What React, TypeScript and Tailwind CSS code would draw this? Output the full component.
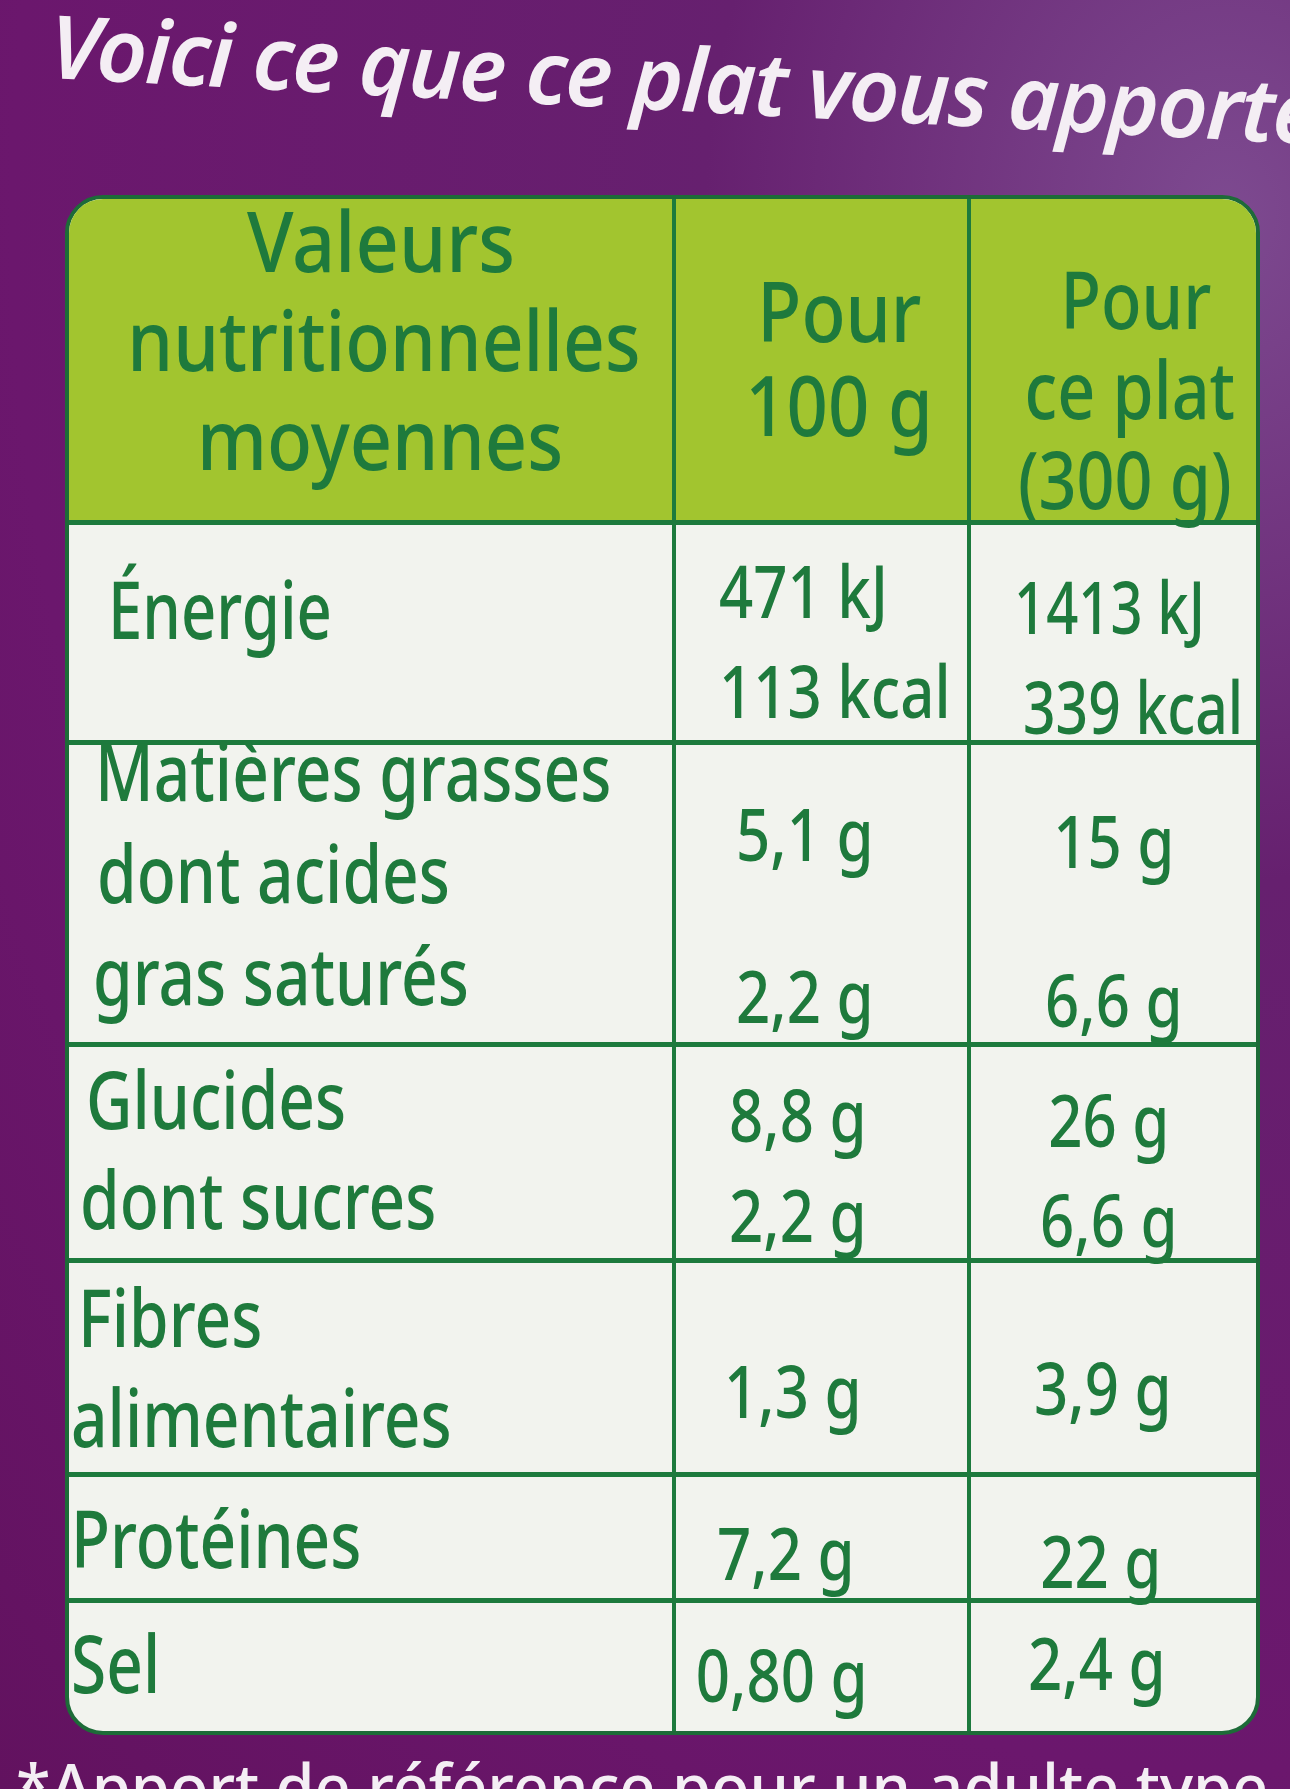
export default function App() {
  const font = "font-['Noto_Sans',_'Open_Sans',_sans-serif]";

  return (
    <div
      className={`w-[1290px] h-[1789px] overflow-hidden bg-[radial-gradient(ellipse_at_95%_12%,#7d4a90_0%,#66206f_30%,#6b176d_70%,#62125f_100%)] ${font}`}
    >
      {/* Handwritten title */}
      <div className="h-[195px] pl-[50px]">
        <div className="origin-left -translate-y-[6px] rotate-[3deg] whitespace-nowrap text-[88px] leading-[100px] italic font-semibold tracking-[-0.02em] text-[#f4eef4]">
          Voici ce que ce plat vous apporte
        </div>
      </div>

      {/* Nutrition table */}
      <div className="ml-[65px] w-[1195px] overflow-hidden rounded-[38px] border-4 border-[#1d6b38] bg-[#f2f3ee] font-medium text-[#1e7a3c]">
        {/* Header */}
        <div className="grid h-[326px] grid-cols-[603px_295px_289px] border-b-[5px] border-[#1d7a3d] bg-[#a2c52f] whitespace-nowrap">
          <div className="-mt-[9px] pl-[20px] text-center text-[84px] leading-[99px]">
            <Line c="origin-center scale-x-[0.9]">Valeurs</Line>
            <Line c="origin-center scale-x-[0.87]">nutritionnelles</Line>
            <Line c="origin-center scale-x-[0.88]">moyennes</Line>
          </div>
          <div className="border-l-[4px] border-[#1d7a3d] pl-[36px] pt-[64px] text-center text-[84px] leading-[94px]">
            <Line c="origin-center scale-x-[0.86]">Pour</Line>
            <Line c="origin-center scale-x-[0.86]">100 g</Line>
          </div>
          <div className="border-l-[4px] border-[#1d7a3d] pt-[54px] text-center text-[80px] leading-[90px]">
            <Line className="pl-[44px]" c="origin-center scale-x-[0.83]">Pour</Line>
            <Line className="pl-[32px]" c="origin-center scale-x-[0.83]">ce plat</Line>
            <Line className="pl-[22px]" c="origin-center scale-x-[0.83]">(300 g)</Line>
          </div>
        </div>

        {/* Énergie */}
        <Row h="h-[220px]">
          <div className="pl-[39px] pt-[33px]">
            <Line c="origin-left scale-x-[0.77]">Énergie</Line>
          </div>
          <Cell>
            <div className="pl-[43px] pt-[15px] text-left text-[73px]">
              <Line c="origin-left scale-x-[0.82]">471 kJ</Line>
              <Line c="origin-left scale-x-[0.82]">113 kcal</Line>
            </div>
          </Cell>
          <Cell>
            <div className="pt-[31px] text-left text-[73px]">
              <Line className="pl-[43px]" c="origin-left scale-x-[0.77]">1413 kJ</Line>
              <Line className="pl-[52px]" c="origin-left scale-x-[0.78]">339 kcal</Line>
            </div>
          </Cell>
        </Row>

        {/* Matières grasses */}
        <Row h="h-[302px]">
          <div className="-mt-[26px] leading-[102px]">
            <Line className="pl-[26px]" c="origin-left scale-x-[0.8]">Matières grasses</Line>
            <Line className="pl-[28px]" c="origin-left scale-x-[0.8]">dont acides</Line>
            <Line className="pl-[24px]" c="origin-left scale-x-[0.8]">gras saturés</Line>
          </div>
          <Cell className="pr-[34px]">
            <Val className="pt-[38px]">5,1 g</Val>
            <Val className="mt-[62px]">2,2 g</Val>
          </Cell>
          <Cell>
            <Val className="pt-[45px]">15 g</Val>
            <Val className="mt-[59px]">6,6 g</Val>
          </Cell>
        </Row>

        {/* Glucides */}
        <Row h="h-[216px]">
          <div className="pt-[1px]">
            <Line className="pl-[17px]" c="origin-left scale-x-[0.8]">Glucides</Line>
            <Line className="pl-[11px]" c="origin-left scale-x-[0.8]">dont sucres</Line>
          </div>
          <Cell className="pr-[48px]">
            <div className="pt-[17px]">
              <Val>8,8 g</Val>
              <Val>2,2 g</Val>
            </div>
          </Cell>
          <Cell className="pr-[10px]">
            <div className="pt-[22px]">
              <Val>26 g</Val>
              <Val>6,6 g</Val>
            </div>
          </Cell>
        </Row>

        {/* Fibres */}
        <Row h="h-[214px]">
          <div className="pt-[3px]">
            <Line className="pl-[9px]" c="origin-left scale-x-[0.8]">Fibres</Line>
            <Line className="pl-[2px]" c="origin-left scale-x-[0.8]">alimentaires</Line>
          </div>
          <Cell className="pr-[58px]">
            <Val className="pt-[77px]">1,3 g</Val>
          </Cell>
          <Cell className="pr-[22px]">
            <Val className="pt-[74px]">3,9 g</Val>
          </Cell>
        </Row>

        {/* Protéines */}
        <Row h="h-[126px]">
          <div className="pl-[2px] pt-[10px]">
            <Line c="origin-left scale-x-[0.8]">Protéines</Line>
          </div>
          <Cell className="pr-[72px]">
            <Val className="pt-[25px]">7,2 g</Val>
          </Cell>
          <Cell className="pr-[26px]">
            <Val className="pt-[33px]">22 g</Val>
          </Cell>
        </Row>

        {/* Sel */}
        <Row h="h-[128px]" last>
          <div className="pl-[2px] pt-[9px]">
            <Line c="origin-left scale-x-[0.8]">Sel</Line>
          </div>
          <Cell className="pr-[80px]">
            <Val className="pt-[21px]">0,80 g</Val>
          </Cell>
          <Cell className="pr-[34px]">
            <Val className="pt-[9px]">2,4 g</Val>
          </Cell>
        </Row>
      </div>

      {/* Footnote, cut by the bottom edge */}
      <div className="mt-[8px] whitespace-nowrap pl-[16px] text-[63px] leading-[86px] font-medium text-[#f4eef4]">
        *Apport de référence pour un adulte type
      </div>
    </div>
  );
}

// one line of the label text, narrowed to the packaging's condensed face
function Line({ c, className = "", children }: { c: string; className?: string; children: React.ReactNode }) {
  return (
    <div className={className}>
      <span className={`inline-block ${c}`}>{children}</span>
    </div>
  );
}

function Val({ className = "", children }: { className?: string; children: React.ReactNode }) {
  return (
    <Line className={`text-[73px] ${className}`} c="origin-center scale-x-[0.82]">
      {children}
    </Line>
  );
}

function Row({ h, last, children }: { h: string; last?: boolean; children: React.ReactNode }) {
  return (
    <div
      className={`grid ${h} grid-cols-[603px_295px_289px] whitespace-nowrap text-[80px] leading-[100px] ${
        last ? "" : "border-b-[5px] border-[#1d7a3d]"
      }`}
    >
      {children}
    </div>
  );
}

function Cell({ className = "", children }: { className?: string; children: React.ReactNode }) {
  return <div className={`border-l-[4px] border-[#1d7a3d] text-center ${className}`}>{children}</div>;
}
